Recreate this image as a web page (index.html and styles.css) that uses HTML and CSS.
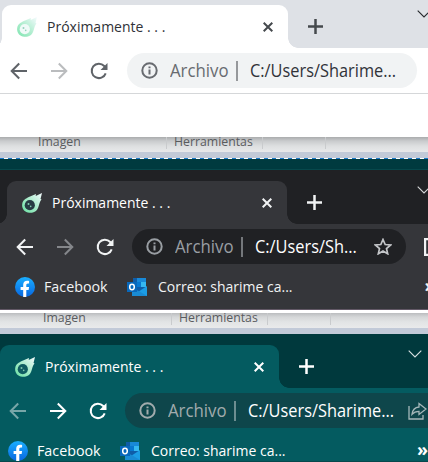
FILE: index.html
```
<!DOCTYPE html>
<html lang="es">
<head>
<meta charset="utf-8">
<title>Próximamente . . .</title>
<link rel="stylesheet" href="styles.css">
</head>
<body>
<svg class="defs" width="0" height="0" aria-hidden="true">
  <defs>
    <linearGradient id="mint" x1="0" y1="1" x2="1" y2="0"><stop offset="0" stop-color="#68e0a2"/><stop offset=".5" stop-color="#a9eccb"/><stop offset="1" stop-color="#f5fbff"/></linearGradient>
    <linearGradient id="fbblue" x1="0" y1="0" x2="0" y2="1"><stop offset="0" stop-color="#1aafff"/><stop offset="1" stop-color="#0866e0"/></linearGradient>
    <symbol id="comet" viewBox="0 0 20 20"><path d="M.5 9.500C2 6 5 5 8 3.500l6-2.500-.3 2L20 0l-1.500 6 1 .2c-2 3-2 4.500-3.200 8-1.300 4-5 6-9 5.600C2 19.300-1 15 .5 9.500Z" fill="url(#mint)"/><circle cx="7.800" cy="12.200" r="5.100" class="eye"/><circle cx="6.500" cy="11" r="1" class="dot"/><circle cx="8.700" cy="13.400" r=".8" class="dot"/></symbol>
    <symbol id="back" viewBox="0 0 18 18"><path d="M17 9H2M9.200 1.500 1.700 9l7.500 7.500" fill="none" stroke="currentColor" stroke-width="2"/></symbol>
    <symbol id="reload" viewBox="0 0 18 18"><path d="M15.700 11.300A7.200 7.200 0 1 1 14.200 4l1.500 1.700" fill="none" stroke="currentColor" stroke-width="2"/><path d="M17.500 1v7h-7Z" fill="currentColor"/></symbol>
    <symbol id="info" viewBox="0 0 17 17"><circle cx="8.500" cy="8.500" r="7.200" fill="none" stroke="currentColor" stroke-width="2"/><path d="M8.500 7.500v5M8.500 4.500v1.700" stroke="currentColor" stroke-width="2"/></symbol>
    <symbol id="close" viewBox="0 0 10 10"><path d="m.7.700 8.600 8.600m0-8.600L.7 9.300" stroke="currentColor" stroke-width="2"/></symbol>
    <symbol id="plus" viewBox="0 0 15 15"><path d="M7.500 0v15M0 7.500h15" stroke="currentColor" stroke-width="2.500"/></symbol>
    <symbol id="chevron" viewBox="0 0 14 8"><path d="m.7.700 6.300 6.300L13.300.7" fill="none" stroke="currentColor" stroke-width="1.100"/></symbol>
    <symbol id="facebook" viewBox="0 0 20 20"><circle cx="10" cy="10" r="10" fill="url(#fbblue)"/><path d="M8.200 20v-7H5.600v-3h2.600V7.800c0-2.700 1.500-4.100 3.900-4.100 1 0 2 .2 2 .2v2.500h-1.200c-1.200 0-1.600.8-1.600 1.500V10h2.800l-.5 3h-2.300v7Z" fill="#fff"/></symbol>
    <symbol id="outlook" viewBox="0 0 20 18"><path d="M6 0h13v13H6Z" fill="#0f5da8"/><path d="M10 0h9v5h-9Z" fill="#1889d8"/><path d="M14 4h5v5h-5Z" fill="#35b8f1"/><path d="M10 4h4v5h-4Z" fill="#0878d0"/><path d="m5 9 8 5-8 4Z" fill="#123b6d"/><path d="M20 8v10H5Z" fill="#1c9de5"/><path d="m5 9 15 9H5Z" fill="#198bd4"/><path d="M0 4h10v10H0Z" fill="#0868bb"/><ellipse cx="5" cy="9" rx="2.300" ry="2.700" fill="none" stroke="#fff" stroke-width="1.500"/></symbol>
    <symbol id="star" viewBox="0 0 18 17"><path d="m9 1.500 2.200 5 5.400.5-4.100 3.600 1.200 5.200L9 13l-4.700 2.800 1.200-5.200L1.400 7l5.400-.5Z" fill="none" stroke="currentColor" stroke-width="1.700"/></symbol>
    <symbol id="share" viewBox="0 0 19 18"><path d="M1 4v13h14v-4" fill="none" stroke="currentColor" stroke-width="1.300"/><path d="M11 1.500 18 7l-7 5.500V9.300c-3 0-5 .7-7 3 .5-4 3-7 7-7.300Z" fill="none" stroke="currentColor" stroke-width="1.300"/></symbol>
    <symbol id="tile" viewBox="0 0 18 18"><path d="M1 1h16v16H1Z" fill="none" stroke="currentColor" stroke-width="2.400"/></symbol>
  </defs>
</svg>

<section class="browser light">
  <div class="tabs">
    <div class="tab"><svg class="favicon"><use href="#comet"/></svg><span class="title"><span class="fit-title">Próximamente . . .</span></span><svg class="close"><use href="#close"/></svg></div>
    <svg class="plus"><use href="#plus"/></svg><svg class="chevron"><use href="#chevron"/></svg>
  </div>
  <div class="toolbar">
    <svg class="nav"><use href="#back"/></svg><svg class="nav flip faded"><use href="#back"/></svg><svg class="nav"><use href="#reload"/></svg>
    <div class="address"><svg class="info"><use href="#info"/></svg><span class="scheme"><span class="fit-scheme">Archivo</span></span><i class="divider"></i><span class="url"><span class="fit-url">C:/Users/Sharime...</span></span></div>
  </div>
  <div class="page"></div>
</section>

<div class="ribbon first"><span class="group image"><span class="fit-label">Imagen</span></span><span class="group tools"><span class="fit-label">Herramientas</span></span><span class="group extra"></span></div>
<div class="edge"></div>
<div class="selection"></div>
<div class="gap"></div>

<section class="browser dark">
  <div class="tabs">
    <div class="tab"><svg class="favicon"><use href="#comet"/></svg><span class="title"><span class="fit-title">Próximamente . . .</span></span><svg class="close"><use href="#close"/></svg></div>
    <svg class="plus"><use href="#plus"/></svg><svg class="chevron"><use href="#chevron"/></svg>
  </div>
  <div class="toolbar">
    <svg class="nav"><use href="#back"/></svg><svg class="nav flip faded"><use href="#back"/></svg><svg class="nav"><use href="#reload"/></svg>
    <div class="address"><svg class="info"><use href="#info"/></svg><span class="scheme"><span class="fit-scheme">Archivo</span></span><i class="divider"></i><span class="url"><span class="fit-url">C:/Users/Sh...</span></span><svg class="star"><use href="#star"/></svg></div>
    <svg class="tile"><use href="#tile"/></svg>
  </div>
  <div class="bookmarks"><svg class="fb"><use href="#facebook"/></svg><span class="fb-name"><span class="fit-mark">Facebook</span></span><svg class="mail"><use href="#outlook"/></svg><span class="mail-name"><span class="fit-mail">Correo: sharime ca...</span></span><span class="more">»</span></div>
</section>

<div class="bottom-rule"></div>
<div class="ribbon second"><span class="group image"><span class="fit-label">Imagen</span></span><span class="group tools"><span class="fit-label">Herramientas</span></span><span class="group extra"></span></div>
<div class="edge"></div>

<section class="browser teal">
  <div class="tabs">
    <div class="tab"><svg class="favicon"><use href="#comet"/></svg><span class="title"><span class="fit-title">Próximamente . . .</span></span><svg class="close"><use href="#close"/></svg></div>
    <svg class="plus"><use href="#plus"/></svg><svg class="chevron"><use href="#chevron"/></svg>
  </div>
  <div class="toolbar">
    <svg class="nav faded"><use href="#back"/></svg><svg class="nav flip"><use href="#back"/></svg><svg class="nav"><use href="#reload"/></svg>
    <div class="address"><svg class="info"><use href="#info"/></svg><span class="scheme"><span class="fit-scheme">Archivo</span></span><i class="divider"></i><span class="url"><span class="fit-url">C:/Users/Sharime...</span></span><svg class="share"><use href="#share"/></svg></div>
  </div>
  <div class="bookmarks"><svg class="fb"><use href="#facebook"/></svg><span class="fb-name"><span class="fit-mark">Facebook</span></span><svg class="mail"><use href="#outlook"/></svg><span class="mail-name"><span class="fit-mail">Correo: sharime ca...</span></span><span class="more">»</span></div>
</section>
</body>
</html>
```
FILE: styles.css
```
* { box-sizing: border-box; }
body { margin: 0; width: 428px; height: 462px; overflow: hidden; font-family: "Open Sans", "Noto Sans", sans-serif; }
.defs { display: block; height: 0; }
svg { display: block; flex: none; }

.browser { width: 428px; overflow: hidden; color: var(--ink); background: var(--bar); }
.tabs { display: flex; background: var(--frame); padding-left: var(--tab-left); }
.tab { flex: none; position: relative; display: flex; align-items: center; height: 43px; background: var(--bar); border-radius: 9px 9px 0 0; padding-left: 15px; }
.tab::after { content: ""; position: absolute; left: 100%; bottom: 0; width: 10px; height: 10px; background: radial-gradient(circle at 100% 0, transparent 9.5px, var(--bar) 10px); }
.tab::before { content: ""; position: absolute; right: 100%; bottom: 0; width: 10px; height: 10px; background: radial-gradient(circle at 0 0, transparent 9.5px, var(--bar) 10px); }
.favicon { width: 20px; height: 20px; }
.eye { fill: var(--eye); }
.dot { fill: #83cab1; }
.title { width: 119px; margin-left: 10px; font-size: 14.5px; line-height: 20px; white-space: nowrap; color: var(--title); }
.close { width: 10px; height: 10px; margin-left: auto; margin-right: 15px; }
.plus { width: 15px; height: 15px; margin: 14px 0 0 20px; }
.chevron { width: 14px; height: 8px; }

.toolbar { display: flex; align-items: center; height: 45px; }
.nav { width: 18px; height: 18px; margin-right: 22px; }
.flip { transform: scaleX(-1); }
.faded { color: var(--faded); }
.address { flex: none; display: flex; align-items: center; height: 35px; margin-left: -4px; padding-left: 14px; background: var(--field); border-radius: 18px; white-space: nowrap; font-size: 17.5px; line-height: 25px; }
.info { width: 17px; height: 17px; color: var(--muted); }
.scheme { width: 58px; margin-left: 12px; color: var(--muted); }
.divider { flex: none; width: 2px; height: 20px; margin: 0 12px 0 8px; background: var(--divider); }
.url { color: var(--title); width: 146px; }

.fit-title, .fit-scheme, .fit-url, .fit-label, .fit-mark, .fit-mail { display: inline-block; transform-origin: 0 50%; }
.fit-title { transform: scaleX(.965); }
.fit-scheme { transform: scaleX(.96); }
.fit-url { transform: scaleX(.935); }
.fit-label { transform: scaleX(.945); }
.fit-mark { transform: scaleX(.985); }
.fit-mail { transform: scaleX(.965); }

.bookmarks { display: flex; align-items: center; white-space: nowrap; font-size: 14.5px; line-height: 20px; }
.fb { width: 20px; height: 20px; }
.fb-name { width: 66px; margin-left: 9px; }
.mail { width: 20px; height: 18px; margin-left: 18px; }
.mail-name { width: 136px; margin-left: 11px; }
.more { font-size: 18px; font-weight: 700; line-height: 18px; position: relative; top: -2px; }

.light { --frame: #dee1e6; --bar: #fff; --ink: #5f6368; --title: #303238; --faded: #babcbe; --field: #f1f3f4; --muted: #686b70; --divider: #96989b; --eye: #eefaf7; --tab-left: 2px; height: 137px; }
.light .tabs { height: 48px; padding-top: 5px; }
.light .tab { width: 286px; }
.light .close, .light .plus { color: #45494d; }
.light .chevron { margin: 5px 0 0 94px; color: #25282b; }
.light .favicon { opacity: .85; }
.light .toolbar { padding-left: 10px; }
.light .address { width: 290px; margin-left: -3px; }
.light .page { height: 44px; border-top: 1px solid #d5d7d9; }

.ribbon { display: flex; overflow: hidden; color: #595b5e; font-size: 13px; line-height: 16px; white-space: nowrap; }
.first { height: 15px; background: linear-gradient(#aaacad 0, #c9cbcd 4px, #dddfe0 9px, #e8e9eb 15px); padding-left: 37px; }
.second { height: 15px; background: linear-gradient(#bbbdbf 0, #d5d7d8 4px, #e2e4e5 9px, #e9eaeb 15px); padding-left: 42px; }
.group { height: 12px; border-right: 1px solid #c9cbcd; }
.group > span { position: relative; top: -4px; }
.image { width: 130px; padding-left: 1px; }
.tools { width: 96px; padding-left: 7px; }
.extra { width: 63px; }
.edge { height: 6px; background: #c2cad8; }
.selection { height: 1px; background: repeating-linear-gradient(90deg, #1979c9 0 4px, #fff 4px 8px); }
.gap { height: 11px; background: linear-gradient(#003a3f 0 10px, #07484c 10px 11px); }

.dark { --frame: #202124; --bar: #35363a; --ink: #f1f3f4; --title: #fff; --faded: #85878b; --field: #202124; --muted: #999ea3; --divider: #74777b; --eye: #263c43; --tab-left: 7px; height: 139px; }
.dark .tabs { height: 54px; padding-top: 11px; }
.dark .tab { width: 280px; }
.dark .chevron { margin: 5px 0 0 95px; color: #d6d8da; }
.dark .toolbar { padding-left: 16px; }
.dark .address { width: 274px; }
.dark .url { width: 103px; }
.star { width: 18px; height: 17px; margin-left: 16px; color: #c4c6c9; }
.tile { width: 18px; height: 18px; margin-left: 18px; }
.dark .bookmarks { height: 36px; padding-left: 15px; }
.dark .more { margin-left: 131px; }
.bottom-rule { height: 4px; background: #fff; border-top: 1px solid #625866; }

.teal { --frame: #00393d; --bar: #045b60; --ink: #fff; --title: #fff; --faded: #78a6a8; --field: #0e464b; --muted: #a1abad; --divider: #6d8e91; --eye: #105d62; --tab-left: 0; height: 128px; border-bottom: 1px solid #07494d; }
.teal .tabs { height: 54px; padding-top: 11px; }
.teal .tab { width: 279px; }
.teal .chevron { margin: 5px 0 0 94px; color: #d8e2e3; }
.teal .toolbar { padding-left: 9px; }
.teal .address { width: 330px; }
.share { width: 19px; height: 18px; margin-left: 14px; color: #a6b8ba; }
.teal .bookmarks { height: 36px; padding-left: 8px; }
.teal .more { margin-left: 130px; }
```
